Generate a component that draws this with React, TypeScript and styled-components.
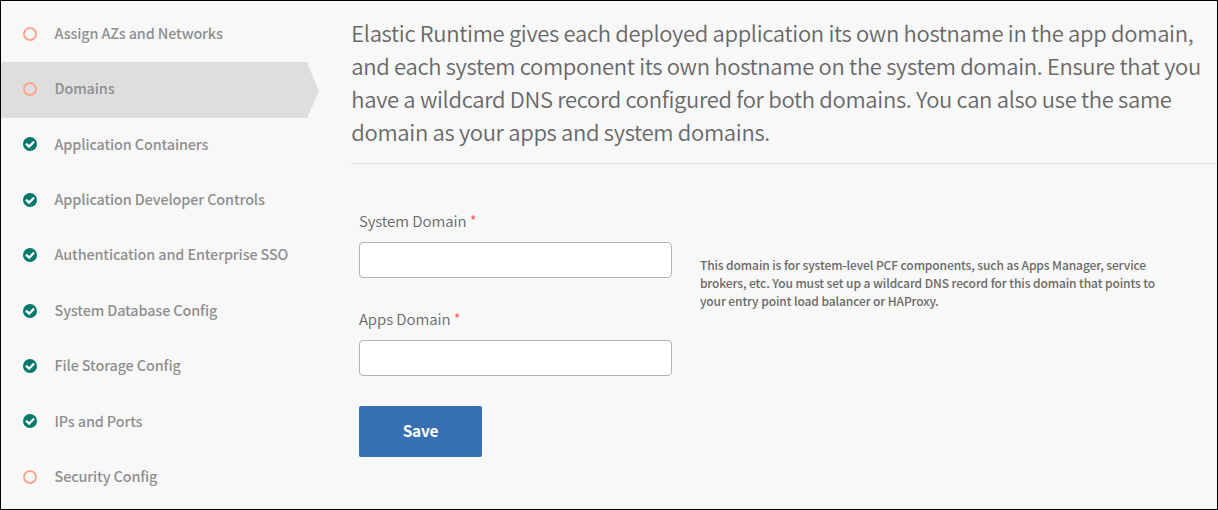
import React from "react";
import styled, { createGlobalStyle, css } from "styled-components";

const GlobalStyle = createGlobalStyle`
  * { box-sizing: border-box; }
  body {
    margin: 0;
    font-family: "Noto Sans CJK SC", "Noto Sans", sans-serif;
    background: #f8f8f8;
    color: #686868;
  }
`;

const Page = styled.div`
  display: flex;
  width: 1218px;
  height: 510px;
  border: 1px solid #000;
  background: #f8f8f8;
  overflow: hidden;
`;

const Sidebar = styled.nav`
  flex: none;
  width: 318px;
  padding-top: 5.6px;
`;

const NavItem = styled.a<{ $active?: boolean }>`
  display: flex;
  align-items: center;
  height: 55.4px;
  padding-left: 22px;
  font-size: 14.4px;
  font-weight: 500;
  letter-spacing: -0.12px;
  color: #8f8f8f;
  white-space: nowrap;
  ${({ $active }) =>
    $active &&
    css`
      height: 56px;
      margin-bottom: -0.6px;
      background: #dedede;
      clip-path: polygon(0 0, 307px 0, 307px 3px, 318px 29px, 307px 54px, 307px 100%, 0 100%);
    `}
`;

const NavText = styled.span`
  padding-bottom: 4px;
`;

const StatusIcon = styled.svg`
  flex: none;
  width: 14px;
  height: 14px;
  margin: 0 17.5px 1.2px 0;
`;

const Main = styled.main`
  flex: 1;
  padding-left: 32px;
`;

const Intro = styled.p`
  margin: 0;
  padding: 15px 0 0 0.3px;
  height: 163px;
  border-bottom: 1px solid #e2e2e2;
  font-size: 22px;
  line-height: 33px;
  font-weight: 350;
  letter-spacing: -0.318px;
  white-space: nowrap;
`;

const Form = styled.form`
  display: flex;
  align-items: flex-start;
  padding: 44px 0 0 7px;
`;

const Fields = styled.div`
  width: 313px;
  margin-left: 0.5px;
`;

const Field = styled.div`
  margin-bottom: 28px;
`;

const Label = styled.label`
  display: block;
  height: 34px;
  line-height: 26px;
  padding-left: 0.4px;
  font-size: 15px;
  font-weight: 350;
  letter-spacing: -0.07px;
`;

const Required = styled.span`
  color: #ff5a4f;
`;

const Input = styled.input`
  display: block;
  width: 313px;
  height: 36px;
  border: 1px solid #b3b3b3;
  border-radius: 4px;
  background: #fff;
`;

const SaveButton = styled.button`
  width: 123px;
  height: 51px;
  margin-top: 2px;
  padding: 0 0 4px 1px;
  border: 0;
  border-radius: 2px;
  background: #3771b2;
  color: #fff;
  font: 700 15.4px "Noto Sans CJK SC", "Noto Sans", sans-serif;
  letter-spacing: -0.2px;
`;

const Help = styled.p`
  margin: 48px 0 0 28.4px;
  font-size: 12px;
  line-height: 18px;
  font-weight: 500;
  color: #6a6a6a;
  letter-spacing: -0.095px;
  white-space: nowrap;
`;

type Status = "done" | "pending";

const sections: { name: string; status: Status; active?: boolean }[] = [
  { name: "Assign AZs and Networks", status: "pending" },
  { name: "Domains", status: "pending", active: true },
  { name: "Application Containers", status: "done" },
  { name: "Application Developer Controls", status: "done" },
  { name: "Authentication and Enterprise SSO", status: "done" },
  { name: "System Database Config", status: "done" },
  { name: "File Storage Config", status: "done" },
  { name: "IPs and Ports", status: "done" },
  { name: "Security Config", status: "pending" },
];

const StatusMark = ({ status }: { status: Status }) => (
  <StatusIcon viewBox="0 0 14 14" fill="none">
    {status === "done" ? (
      <>
        <circle cx="7" cy="7" r="7" fill="#04786c" />
        <path d="M3 6.6 6.1 9.6 11.1 4.6" stroke="#fff" strokeWidth="2.2" />
      </>
    ) : (
      <circle cx="7" cy="7" r="6" stroke="#faa48c" strokeWidth="1.9" />
    )}
  </StatusIcon>
);

export default function App() {
  return (
    <>
      <GlobalStyle />
      <Page>
        <Sidebar>
          {sections.map((s) => (
            <NavItem key={s.name} $active={s.active}>
              <StatusMark status={s.status} />
              <NavText>{s.name}</NavText>
            </NavItem>
          ))}
        </Sidebar>
        <Main>
          <Intro>
            Elastic Runtime gives each deployed application its own hostname in the app domain,
            <br />
            and each system component its own hostname on the system domain. Ensure that you
            <br />
            have a wildcard DNS record configured for both domains. You can also use the same
            <br />
            domain as your apps and system domains.
          </Intro>
          <Form>
            <Fields>
              <Field>
                <Label htmlFor="system">
                  System Domain <Required>*</Required>
                </Label>
                <Input id="system" />
              </Field>
              <Field>
                <Label htmlFor="apps">
                  Apps Domain <Required>*</Required>
                </Label>
                <Input id="apps" />
              </Field>
              <SaveButton type="button">Save</SaveButton>
            </Fields>
            <Help>
              This domain is for system-level PCF components, such as Apps Manager, service
              <br />
              brokers, etc. You must set up a wildcard DNS record for this domain that points to
              <br />
              your entry point load balancer or HAProxy.
            </Help>
          </Form>
        </Main>
      </Page>
    </>
  );
}
